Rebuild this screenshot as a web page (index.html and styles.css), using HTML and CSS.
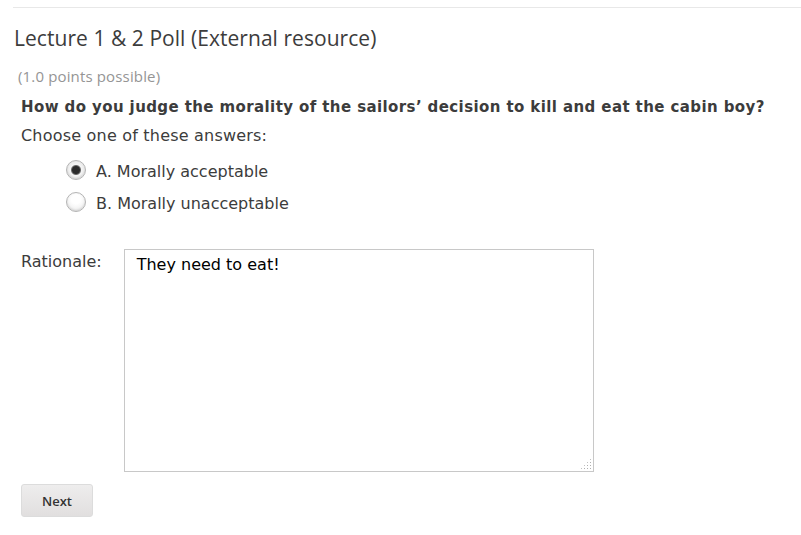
FILE: index.html
```html
<!DOCTYPE html>
<html lang="en">
<head>
  <meta charset="UTF-8"/>
  <title>Lecture 1 &amp; 2 Poll</title>
  <link rel="stylesheet" href="styles.css">
</head>
<body>
<section class="poll">
  <h2 class="poll-title">Lecture 1 &amp; 2 Poll (External resource)</h2>
  <div class="points">(1.0 points possible)</div>
  <p class="question">How do you judge the morality of the sailors’ decision to kill and eat the cabin boy?</p>
  <p class="prompt">Choose one of these answers:</p>
  <div class="choices">
    <label class="choice"><input type="radio" name="answer" checked> A. Morally acceptable</label>
    <label class="choice"><input type="radio" name="answer"> B. Morally unacceptable</label>
  </div>
  <div class="rationale">
    <label for="rationale">Rationale:</label>
    <div class="field">
      <textarea id="rationale">They need to eat!</textarea>
    </div>
  </div>
  <button class="next">Next</button>
</section>
</body>
</html>
```

FILE: styles.css
```css
body {
  margin: 0;
  background: white;
  font-family: 'DejaVu Sans', sans-serif;
  color: #3c3c3c;
}

.poll {
  margin-left: 13px;
  margin-top: 7px;
  border-top: 1px solid #e8e8e8;
}

.poll-title {
  font-family: 'Open Sans', sans-serif;
  font-weight: 400;
  font-size: 21px;
  line-height: 28px;
  letter-spacing: 0.05px;
  color: #3c3c3c;
  margin: 16px 0 0 1px;
}

.points {
  font-family: 'Open Sans', sans-serif;
  font-size: 15px;
  line-height: 20px;
  letter-spacing: 0.15px;
  color: #959595;
  margin: 14px 0 0 5px;
}

.question {
  font-weight: bold;
  font-size: 15px;
  line-height: 20px;
  letter-spacing: 0.4px;
  margin: 11px 0 0 8px;
}

.prompt {
  font-size: 16px;
  line-height: 20px;
  letter-spacing: 0.2px;
  margin: 9px 0 0 8px;
}

.choices {
  display: flex;
  flex-direction: column;
  gap: 12px;
  margin: 16px 0 0 53px;
}

.choice {
  display: flex;
  align-items: center;
  gap: 10px;
  font-size: 16px;
  line-height: 20px;
}

.choice input {
  appearance: none;
  width: 20px;
  height: 20px;
  margin: -4px 0 0 0;
  border: 1px solid #b4b4b4;
  border-radius: 50%;
  background: radial-gradient(circle at 50% 35%, #ffffff 30%, #e6e6e6 100%);
  box-shadow: inset 0 -1px 2px rgba(0, 0, 0, 0.12);
}

.choice input:checked {
  background: radial-gradient(circle, #2a2a2a 0 3.5px, #6a6a6a 4.5px, #f4f4f4 5.5px, #e2e2e2 100%);
}

.rationale {
  display: flex;
  gap: 22px;
  margin: 35px 0 0 8px;
  font-size: 16px;
}

.rationale label {
  padding-top: 3px;
}

.field {
  position: relative;
  width: 470px;
  height: 223px;
}

.field textarea {
  width: 100%;
  height: 100%;
  box-sizing: border-box;
  border: 1px solid #c8c8c8;
  padding: 5px 12px;
  font-family: 'DejaVu Sans', sans-serif;
  font-size: 16px;
  color: black;
  resize: none;
  outline: none;
}

.field::after {
  content: '';
  position: absolute;
  right: 2px;
  bottom: 2px;
  width: 12px;
  height: 12px;
  background: radial-gradient(#b0b0b0 0.9px, transparent 1px) 0 0 / 3px 3px;
  clip-path: polygon(100% 0, 100% 100%, 0 100%);
}

.next {
  display: block;
  margin: 12px 0 0 8px;
  width: 72px;
  height: 33px;
  border: 1px solid #dcdcdc;
  border-radius: 3px;
  background: linear-gradient(#eeeded, #e1dfdf);
  font-family: 'Open Sans', sans-serif;
  font-weight: 600;
  font-size: 13px;
  color: #333;
}
```
